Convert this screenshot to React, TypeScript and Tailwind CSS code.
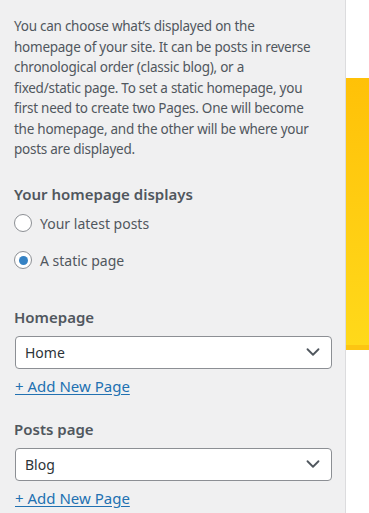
import { ChevronDown } from 'lucide-react';

const font = { fontFamily: '"Noto Sans", "Open Sans", sans-serif' };

function Radio({ label, checked }: { label: string; checked?: boolean }) {
  return (
    <label className="flex items-center h-[21px] text-[14px] text-[#50575e]">
      <span className="w-[18px] h-[18px] rounded-full border border-[#8c8f94] bg-white flex items-center justify-center">
        {checked && <span className="w-[9px] h-[9px] rounded-full bg-[#3582c4]" />}
      </span>
      <span className="ml-[8px]">{label}</span>
    </label>
  );
}

function PageSelect({ label, value }: { label: string; value: string }) {
  return (
    <div>
      <div className="text-[15px] font-semibold leading-[21px] text-[#50575e]">{label}</div>
      <div className="mt-[8px] ml-[1px] w-[317px] h-[33px] rounded-[4px] border border-[#8c8f94] bg-white flex items-center justify-between pl-[9px] pr-[7px]">
        <span className="text-[14px] text-[#2c3338]">{value}</span>
        <ChevronDown className="w-[22px] h-[22px] text-[#50575e]" strokeWidth={2} />
      </div>
      <a className="mt-[7px] ml-[1px] block text-[15px] leading-[21px] text-[#2271b1] underline underline-offset-2">
        + Add New Page
      </a>
    </div>
  );
}

export default function App() {
  return (
    <div className="flex w-[369px] h-[513px] overflow-hidden bg-white" style={font}>
      <div className="w-[346px] shrink-0 h-full bg-[#f0f0f1] border-r border-[#dcdcde] pl-[14px] pr-[4px] pt-[16px]">
        <p className="text-[13.5px] leading-[20.5px] tracking-[-0.25px] whitespace-nowrap text-[#50575e]">
          You can choose what&rsquo;s displayed on the
          <br />
          homepage of your site. It can be posts in reverse
          <br />
          chronological order (classic blog), or a
          <br />
          fixed/static page. To set a static homepage, you
          <br />
          first need to create two Pages. One will become
          <br />
          the homepage, and the other will be where your
          <br />
          posts are displayed.
        </p>
        <div className="mt-[24px] text-[15px] font-semibold leading-[21px] text-[#50575e]">
          Your homepage displays
        </div>
        <div className="mt-[8px] flex flex-col gap-[16px]">
          <Radio label="Your latest posts" />
          <Radio label="A static page" checked />
        </div>
        <div className="mt-[36px] flex flex-col gap-[22px]">
          <PageSelect label="Homepage" value="Home" />
          <PageSelect label="Posts page" value="Blog" />
        </div>
      </div>
      <div className="flex-1">
        <div className="mt-[78px] h-[272px] flex flex-col">
          <div className="flex-1 bg-gradient-to-b from-[#ffc107] to-[#ffd91a]" />
          <div className="h-[5px] bg-[#fcc512]" />
        </div>
      </div>
    </div>
  );
}
